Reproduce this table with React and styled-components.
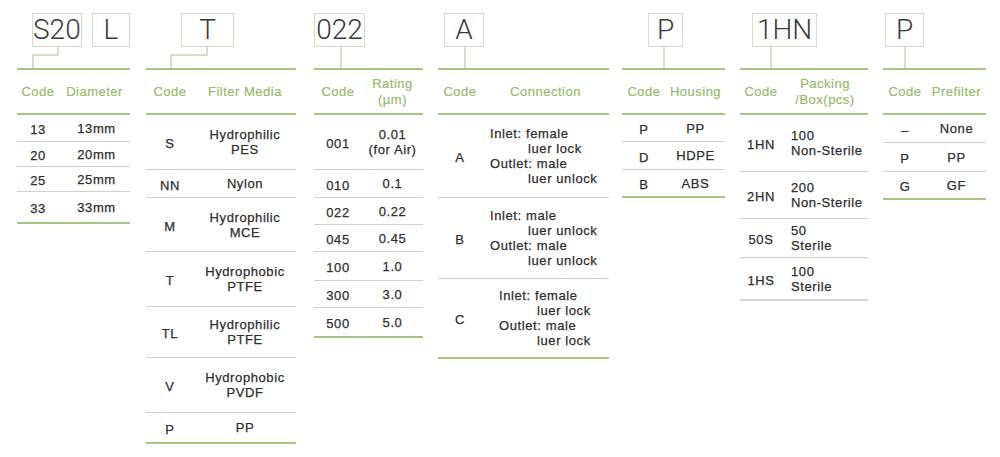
import styled, { createGlobalStyle } from "styled-components";

const green = "#a6c67f";
const headGreen = "#98ba6c";
const rule = "#d0d0d0";

const GlobalStyle = createGlobalStyle`
  html, body {
    margin: 0;
    background: #fff;
  }
  body {
    font-family: "Liberation Sans", Arial, sans-serif;
    color: #2e2e2e;
  }
`;

const Page = styled.main`
  display: flex;
  align-items: flex-start;
  width: 1000px;
  height: 457px;
  padding-left: 17px;
  box-sizing: border-box;
  overflow: hidden;
`;

const Column = styled.section`
  flex: none;
  width: ${(p) => p.$w}px;
  margin-left: ${(p) => p.$gap}px;
  display: flex;
  flex-direction: column;
`;

const BoxRow = styled.div`
  display: flex;
  gap: 10px;
  margin-top: 13px;
  padding-left: ${(p) => p.$offset}px;
`;

const CodeBox = styled.div`
  width: ${(p) => p.$w}px;
  height: 34px;
  box-sizing: border-box;
  border: 1.5px solid #d5dacb;
  font-family: Roboto, "Liberation Sans", sans-serif;
  font-weight: 300;
  font-size: 28px;
  line-height: 31px;
  text-align: center;
  color: #3a3a3a;
`;

const Connector = styled.svg`
  display: block;
  width: 100%;
  height: 21px;

  path {
    fill: none;
    stroke: #c8d4b6;
    stroke-width: 1.5;
  }
`;

const HeaderRow = styled.div`
  display: grid;
  grid-template-columns: ${(p) => p.$code}px 1fr;
  align-items: center;
  height: 47px;
  box-sizing: border-box;
  border-top: 2px solid ${green};
  border-bottom: 2px solid ${green};
  color: ${headGreen};
  font-size: 13px;
  letter-spacing: 0.5px;
  line-height: 16px;
  text-align: center;
  -webkit-text-stroke: 0.2px currentColor;
`;

const DataRow = styled.div`
  display: grid;
  grid-template-columns: ${(p) => p.$code}px 1fr;
  align-items: center;
  height: ${(p) => p.$h}px;
  box-sizing: border-box;
  border-bottom: ${(p) => (p.$last ? `2px solid ${p.$end}` : `1px solid ${rule}`)};
  font-size: 13px;
  letter-spacing: 0.6px;
  line-height: 15px;
  -webkit-text-stroke: 0.25px currentColor;
`;

const CodeCell = styled.div`
  text-align: center;
  padding-top: 3px;
`;

const ValueCell = styled.div`
  text-align: ${(p) => p.$align};
  padding-left: ${(p) => p.$pad}px;
`;

const Line = styled.span`
  display: block;
  padding-left: ${(p) => p.$indent || 0}px;
`;

const lock = (a, b) => [
  { t: `Inlet: ${a[0]}` },
  { t: a[1], i: 38 },
  { t: `Outlet: ${b[0]}` },
  { t: b[1], i: 38 },
];

const tables = [
  {
    w: 113, gap: 0, code: 42, offset: 15, path: "M41 0V8H16V21",
    boxes: [{ t: "S20", w: 52 }, { t: "L", w: 43 }],
    head: ["Diameter"], pad: 4,
    rows: [
      [27, "13", ["13mm"]],
      [25, "20", ["20mm"]],
      [25, "25", ["25mm"]],
      [32, "33", ["33mm"]],
    ],
  },
  {
    w: 150, gap: 16, code: 48, offset: 35, path: "M61 0V8H25V21",
    boxes: [{ t: "T", w: 53 }],
    head: ["Filter Media"],
    rows: [
      [55, "S", ["Hydrophilic", "PES"]],
      [28, "NN", ["Nylon"]],
      [54, "M", ["Hydrophilic", "MCE"]],
      [55, "T", ["Hydrophobic", "PTFE"]],
      [51, "TL", ["Hydrophilic", "PTFE"]],
      [55, "V", ["Hydrophobic", "PVDF"]],
      [31, "P", ["PP"]],
    ],
  },
  {
    w: 109, gap: 18, code: 48, offset: 0, path: "M27 0V21",
    boxes: [{ t: "022", w: 51 }],
    head: ["Rating", "(µm)"],
    rows: [
      [55, "001", ["0.01", "(for Air)"]],
      [28, "010", ["0.1"]],
      [27, "022", ["0.22"]],
      [27, "045", ["0.45"]],
      [29, "100", ["1.0"]],
      [27, "300", ["3.0"]],
      [30, "500", ["5.0"]],
    ],
  },
  {
    w: 171, gap: 15, code: 44, offset: 6, path: "M27 0V21",
    boxes: [{ t: "A", w: 40 }],
    head: ["Connection"],
    align: "left", pad: 8,
    rows: [
      [83, "A", lock(["female", "luer lock"], ["male", "luer unlock"])],
      [81, "B", lock(["male", "luer unlock"], ["male", "luer unlock"])],
      [80, "C", lock(["female", "luer lock"], ["male", "luer lock"]), 17],
    ],
  },
  {
    w: 103, gap: 13, code: 44, offset: 26, path: "M42 0V21",
    boxes: [{ t: "P", w: 35 }],
    head: ["Housing"],
    rows: [
      [27, "P", ["PP"]],
      [28, "D", ["HDPE"]],
      [28, "B", ["ABS"]],
    ],
  },
  {
    w: 128, gap: 15, code: 42, offset: 12, path: "M31 0V21",
    boxes: [{ t: "1HN", w: 65 }],
    head: ["Packing", "/Box(pcs)"],
    align: "left", pad: 9, end: "#d6d6d6",
    rows: [
      [57, "1HN", ["100", "Non-Sterile"]],
      [47, "2HN", ["200", "Non-Sterile"]],
      [39, "50S", ["50", "Sterile"]],
      [43, "1HS", ["100", "Sterile"]],
    ],
  },
  {
    w: 103, gap: 15, code: 44, offset: 2, path: "M22 0V21",
    boxes: [{ t: "P", w: 39 }],
    head: ["Prefilter"],
    rows: [
      [28, "–", ["None"]],
      [29, "P", ["PP"]],
      [28, "G", ["GF"]],
    ],
  },
];

function SpecTable({ table }) {
  const align = table.align || "center";
  return (
    <Column $w={table.w} $gap={table.gap}>
      <BoxRow $offset={table.offset}>
        {table.boxes.map((b) => (
          <CodeBox key={b.t} $w={b.w}>
            {b.t}
          </CodeBox>
        ))}
      </BoxRow>
      <Connector viewBox={`0 0 ${table.w} 21`} preserveAspectRatio="none">
        <path d={table.path} />
      </Connector>
      <HeaderRow $code={table.code}>
        <div>Code</div>
        <div>
          {table.head.map((h) => (
            <Line key={h}>{h}</Line>
          ))}
        </div>
      </HeaderRow>
      {table.rows.map(([h, code, lines, pad], i) => (
        <DataRow
          key={code + i}
          $h={h}
          $code={table.code}
          $last={i === table.rows.length - 1}
          $end={table.end || green}
        >
          <CodeCell>{code}</CodeCell>
          <ValueCell $align={align} $pad={pad ?? table.pad ?? 0}>
            {lines.map((l, j) =>
              typeof l === "string" ? (
                <Line key={j}>{l}</Line>
              ) : (
                <Line key={j} $indent={l.i}>
                  {l.t}
                </Line>
              )
            )}
          </ValueCell>
        </DataRow>
      ))}
    </Column>
  );
}

export default function App() {
  return (
    <>
      <GlobalStyle />
      <Page>
        {tables.map((t) => (
          <SpecTable key={t.boxes[0].t + t.head[0]} table={t} />
        ))}
      </Page>
    </>
  );
}
